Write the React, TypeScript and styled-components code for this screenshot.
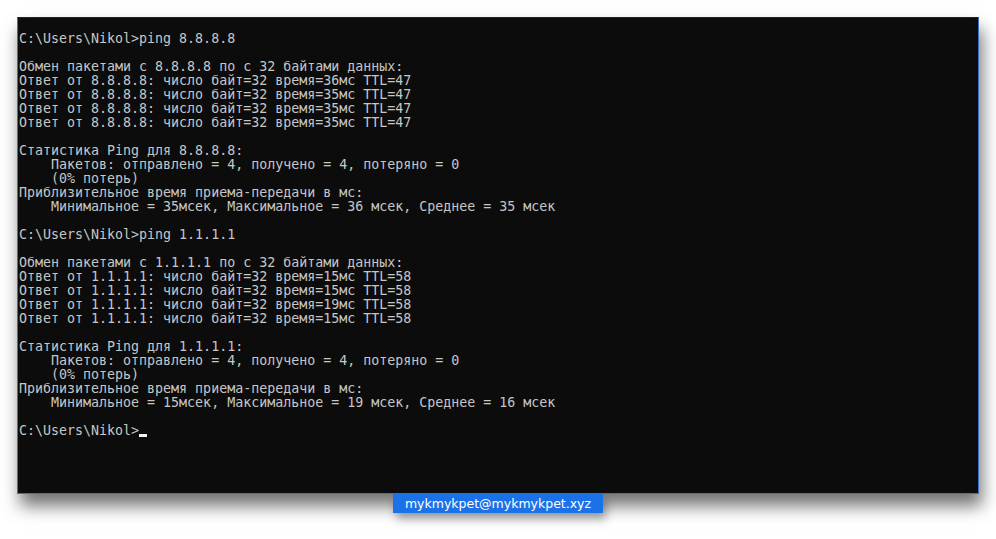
import React from 'react';
import styled, { createGlobalStyle } from 'styled-components';

const GlobalStyle = createGlobalStyle`
  html, body {
    margin: 0;
    padding: 0;
    background: #ffffff;
  }
`;

const lines = [
  'C:\\Users\\Nikol>ping 8.8.8.8',
  '',
  'Обмен пакетами с 8.8.8.8 по с 32 байтами данных:',
  'Ответ от 8.8.8.8: число байт=32 время=36мс TTL=47',
  'Ответ от 8.8.8.8: число байт=32 время=35мс TTL=47',
  'Ответ от 8.8.8.8: число байт=32 время=35мс TTL=47',
  'Ответ от 8.8.8.8: число байт=32 время=35мс TTL=47',
  '',
  'Статистика Ping для 8.8.8.8:',
  '    Пакетов: отправлено = 4, получено = 4, потеряно = 0',
  '    (0% потерь)',
  'Приблизительное время приема-передачи в мс:',
  '    Минимальное = 35мсек, Максимальное = 36 мсек, Среднее = 35 мсек',
  '',
  'C:\\Users\\Nikol>ping 1.1.1.1',
  '',
  'Обмен пакетами с 1.1.1.1 по с 32 байтами данных:',
  'Ответ от 1.1.1.1: число байт=32 время=15мс TTL=58',
  'Ответ от 1.1.1.1: число байт=32 время=15мс TTL=58',
  'Ответ от 1.1.1.1: число байт=32 время=19мс TTL=58',
  'Ответ от 1.1.1.1: число байт=32 время=15мс TTL=58',
  '',
  'Статистика Ping для 1.1.1.1:',
  '    Пакетов: отправлено = 4, получено = 4, потеряно = 0',
  '    (0% потерь)',
  'Приблизительное время приема-передачи в мс:',
  '    Минимальное = 15мсек, Максимальное = 19 мсек, Среднее = 16 мсек',
  '',
];

export default function App() {
  return (
    <>
      <GlobalStyle />
      <Page>
        <Console>
          <Output>
            {lines.map(l => l + '\n').join('')}
            {'C:\\Users\\Nikol>'}
            <Cursor />
          </Output>
        </Console>
        <Badge>mykmykpet@mykmykpet.xyz</Badge>
      </Page>
    </>
  );
}

const Page = styled.div`
  display: flex;
  flex-direction: column;
  align-items: flex-start;
  padding: 17px 0 0 17px;
  width: 996px;
  height: 539px;
  box-sizing: border-box;
`;

const Console = styled.div`
  width: 962px;
  height: 477px;
  box-sizing: border-box;
  background: #0c0c0c;
  border: 1px solid #3d6fc4;
  border-top-color: #1a2438;
  box-shadow: 3px 12px 16px rgba(0, 0, 0, 0.55);
  padding: 14px 0 0 1px;
`;

const Output = styled.pre`
  margin: 0;
  font-family: 'DejaVu Sans Mono', 'Liberation Mono', monospace;
  font-size: 13.3px;
  line-height: 14px;
  color: #c6c6c6;
  white-space: pre;
`;

const Cursor = styled.span`
  display: inline-block;
  width: 8px;
  height: 3px;
  background: #f2f2f2;
  vertical-align: -2px;
`;

const Badge = styled.div`
  margin-left: 376px;
  width: 210px;
  height: 19px;
  background: #1b72e8;
  color: #ffffff;
  font-family: 'DejaVu Sans', 'Liberation Sans', sans-serif;
  font-size: 12.5px;
  line-height: 19px;
  text-align: center;
  position: relative;
  box-shadow: 3px 6px 10px rgba(0, 0, 0, 0.35);
`;
